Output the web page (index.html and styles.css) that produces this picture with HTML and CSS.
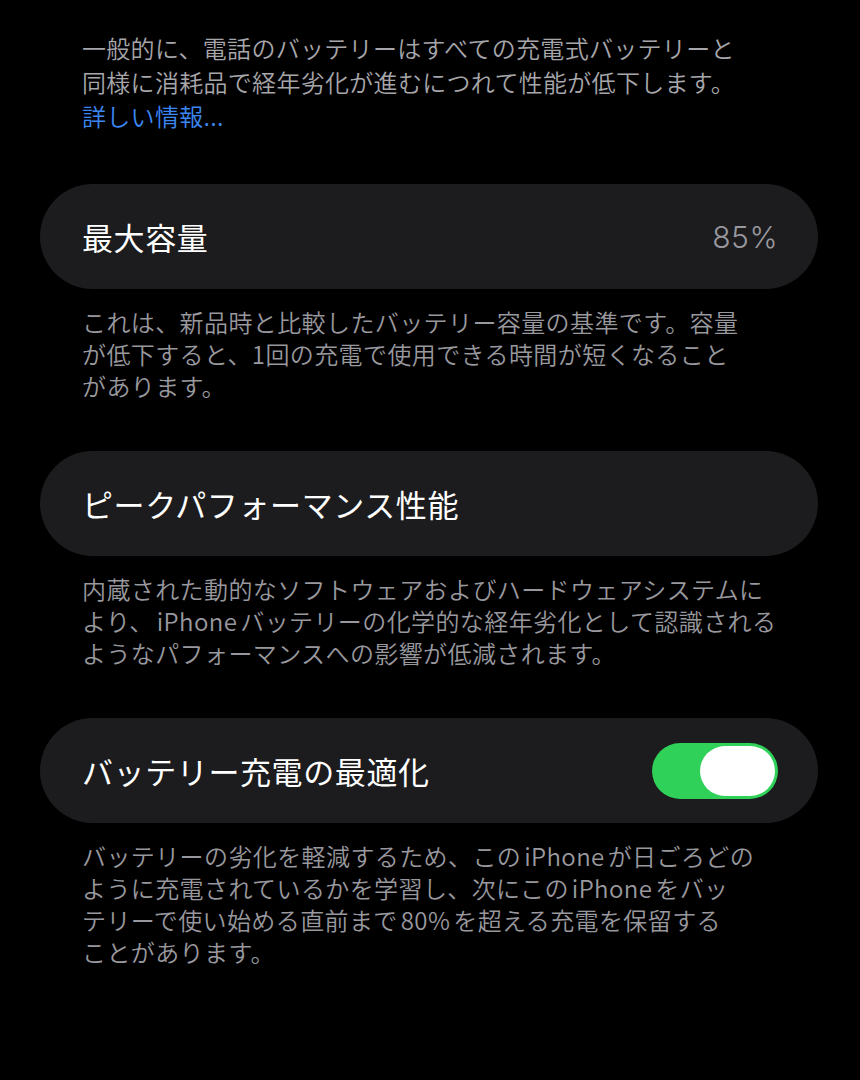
FILE: index.html
```html
<!DOCTYPE html>
<html lang="ja">
<head>
<meta charset="utf-8">
<link rel="stylesheet" href="styles.css">
</head>
<body>
<div class="page">
  <p class="intro">一般的に、電話のバッテリーはすべての充電式バッテリーと<br>同様に消耗品で経年劣化が進むにつれて性能が低下します。<br><span class="link">詳しい情報...</span></p>

  <div class="card">
    <span class="title">最大容量</span>
    <span class="value">85%</span>
  </div>
  <p class="note">これは、新品時と比較したバッテリー容量の基準です。容量<br>が低下すると、1回の充電で使用できる時間が短くなること<br>があります。</p>

  <div class="card">
    <span class="title">ピークパフォーマンス性能</span>
  </div>
  <p class="note">内蔵された動的なソフトウェアおよびハードウェアシステムに<br>より、<span class="lat">iPhone</span>バッテリーの化学的な経年劣化として認識される<br>ようなパフォーマンスへの影響が低減されます。</p>

  <div class="card">
    <span class="title">バッテリー充電の最適化</span>
    <span class="toggle"><span class="knob"></span></span>
  </div>
  <p class="note">バッテリーの劣化を軽減するため、この<span class="lat">iPhone</span>が日ごろどの<br>ように充電されているかを学習し、次にこの<span class="lat">iPhone</span>をバッ<br>テリーで使い始める直前まで<span class="lat">80%</span>を超える充電を保留する<br>ことがあります。</p>
</div>
</body>
</html>
```

FILE: styles.css
```css
html, body {
  margin: 0;
  padding: 0;
  background: #000;
}
body {
  width: 860px;
  height: 1080px;
  overflow: hidden;
  font-family: "Noto Sans CJK JP", "Noto Sans", sans-serif;
}
.page {
  padding: 31px 42px 0 40px;
}
.intro {
  margin: 0 0 51px 0;
  padding-left: 42px;
  font-size: 24px;
  line-height: 34px;
  letter-spacing: 0.3px;
  font-weight: 350;
  color: #a6a6ab;
  white-space: nowrap;
}
.link {
  color: #3b87f5;
}
.card {
  height: 105px;
  border-radius: 53px;
  background: #1c1c1e;
  display: flex;
  align-items: center;
  justify-content: space-between;
  padding: 0 40px 0 42px;
  box-sizing: border-box;
}
.title {
  font-size: 31px;
  letter-spacing: 0.6px;
  color: #fff;
}
.value {
  font-size: 30px;
  font-weight: 300;
  letter-spacing: 0.5px;
  color: #98989e;
  font-family: "Inter", "Noto Sans", sans-serif;
}
.note {
  margin: 17px 0 49px 0;
  padding-left: 42px;
  font-size: 24px;
  line-height: 32px;
  letter-spacing: 0.4px;
  font-weight: 350;
  color: #98989e;
  white-space: nowrap;
}
.lat {
  margin: 0 3px;
}
.toggle {
  width: 126px;
  height: 56px;
  border-radius: 28px;
  background: #30d158;
  display: flex;
  align-items: center;
  justify-content: flex-end;
  padding: 0 3px;
  box-sizing: border-box;
}
.knob {
  width: 75px;
  height: 50px;
  border-radius: 25px;
  background: #fff;
}
```
